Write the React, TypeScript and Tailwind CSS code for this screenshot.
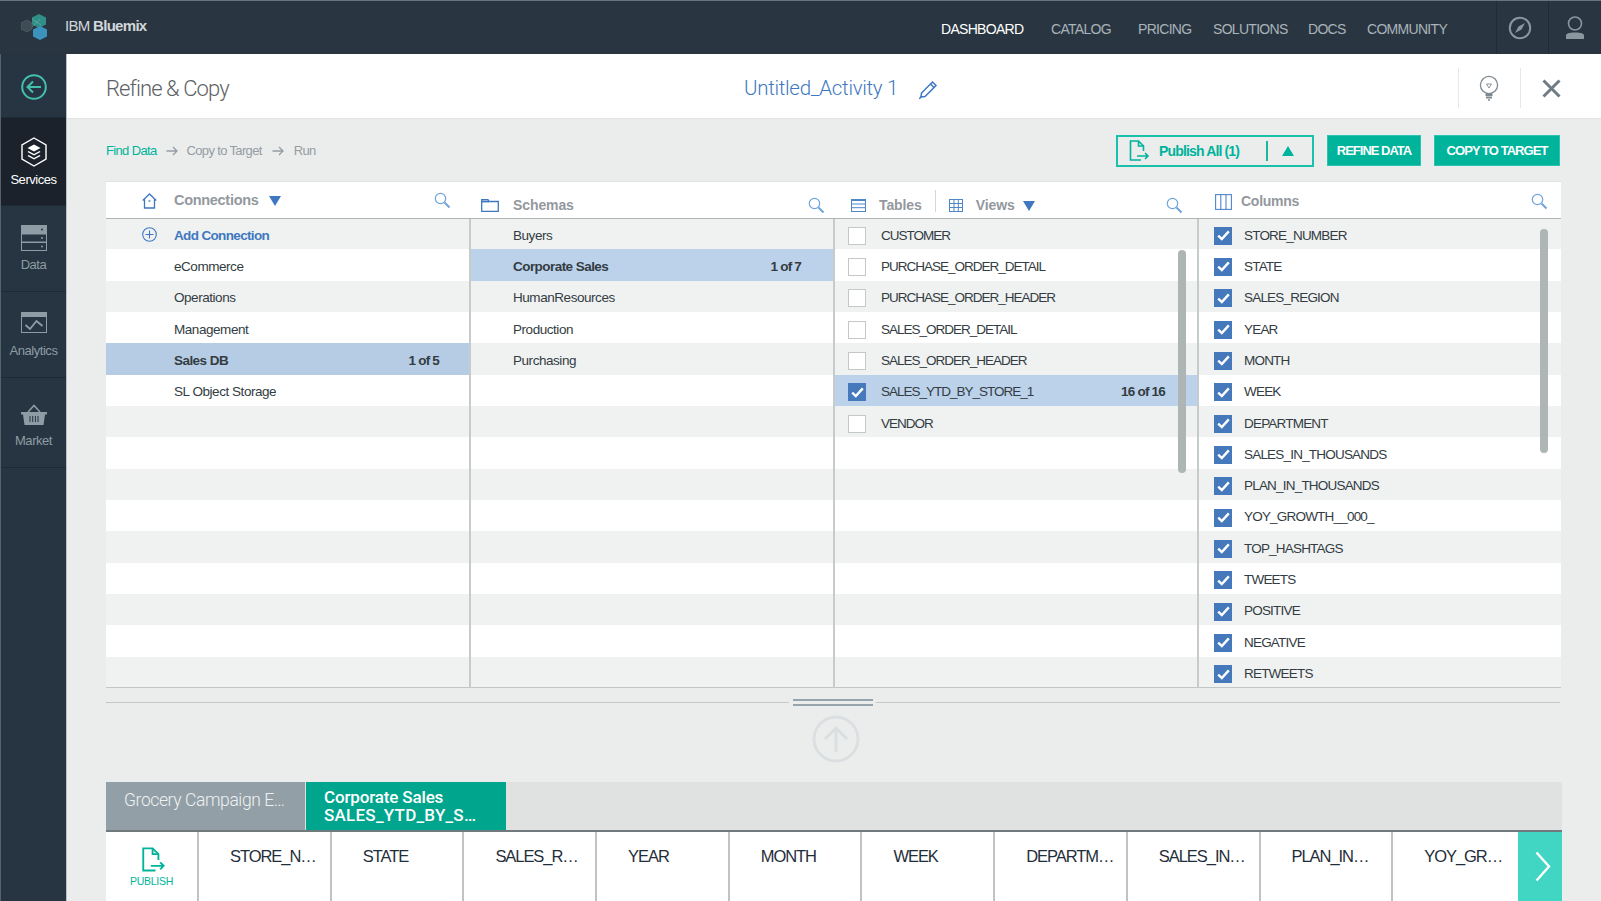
import React from "react";

const connections = ["Add Connection", "eCommerce", "Operations", "Management", "Sales DB", "SL Object Storage"];
const schemas = ["Buyers", "Corporate Sales", "HumanResources", "Production", "Purchasing"];
const tables = ["CUSTOMER", "PURCHASE_ORDER_DETAIL", "PURCHASE_ORDER_HEADER", "SALES_ORDER_DETAIL", "SALES_ORDER_HEADER", "SALES_YTD_BY_STORE_1", "VENDOR"];
const cols = ["STORE_NUMBER", "STATE", "SALES_REGION", "YEAR", "MONTH", "WEEK", "DEPARTMENT", "SALES_IN_THOUSANDS", "PLAN_IN_THOUSANDS", "YOY_GROWTH__000_", "TOP_HASHTAGS", "TWEETS", "POSITIVE", "NEGATIVE", "RETWEETS"];
const heads = ["STORE_N…", "STATE", "SALES_R…", "YEAR", "MONTH", "WEEK", "DEPARTM…", "SALES_IN…", "PLAN_IN…", "YOY_GR…"];
const ROWS = Array.from({ length: 15 }, (_, i) => i);

function Search() {
  return (
    <svg width="17" height="17" viewBox="0 0 17 17" fill="none" stroke="#6fa3dc">
      <circle cx="6.5" cy="6.5" r="5.2" strokeWidth="1.2" />
      <path d="M10.5 10.5 L15.5 15.5" strokeWidth="1.9" />
    </svg>
  );
}
function Tri({ up }: { up?: boolean }) {
  return (
    <svg width="12" height="10" viewBox="0 0 12 10" fill={up ? "#00b39b" : "#3f78c0"}>
      <path d={up ? "M6 0 L12 10 L0 10 Z" : "M0 0 L12 0 L6 10 Z"} />
    </svg>
  );
}
function Box({ on }: { on?: boolean }) {
  if (on)
    return (
      <div className="w-[18px] h-[18px] bg-[#4679bc] flex items-center justify-center shrink-0">
        <svg width="13" height="11" viewBox="0 0 13 11" fill="none" stroke="#fff" strokeWidth="2.4">
          <path d="M1.2 5.6 L4.8 9 L11.8 1.4" />
        </svg>
      </div>
    );
  return <div className="w-[18px] h-[18px] bg-white border border-[#c4c8c8] shrink-0" />;
}
function Publish({ size = 24 }: { size?: number }) {
  return (
    <svg width={size} height={size} viewBox="0 0 24 24" fill="none" stroke="#00b39b" strokeWidth="1.6">
      <path d="M15 21 H4.5 V2 H12.5 L17.5 7 V12" />
      <path d="M12.5 2 V7 H17.5" />
      <path d="M11 17 H22 M19 14 L22 17 L19 20" />
    </svg>
  );
}
function Arrow() {
  return (
    <svg width="12" height="10" viewBox="0 0 12 10" fill="none" stroke="#959ca3" strokeWidth="1.3">
      <path d="M0.5 5 H11 M7 1 L11 5 L7 9" />
    </svg>
  );
}

function Column({ children, head, last }: { children: React.ReactNode; head: React.ReactNode; last?: boolean }) {
  return (
    <div className="min-w-0">
      <div className="h-[37px] border-b border-[#b1b4b4] bg-white flex items-center">{head}</div>
      <div className={"h-[469px] overflow-hidden border-b border-[#c3c6c6] " + (last ? "" : "border-r-2 border-r-[#c8cbcb]")}>{children}</div>
    </div>
  );
}

function Row({ i, selected, children }: { i: number; selected?: string; children?: React.ReactNode }) {
  const bg = selected ? selected : i % 2 === 0 ? "bg-[#f0f2f2]" : "bg-white";
  const h = i === 0 ? "h-[30.33px] pt-[3px]" : "h-[31.33px] pt-[4px]";
  return <div className={h + " flex items-center text-[13.5px] tracking-[-0.45px] text-[#333c42] " + bg}>{children}</div>;
}

function SideItem({ h, active, icon, label }: { h: string; active?: boolean; icon: React.ReactNode; label: string }) {
  return (
    <div className={h + " flex flex-col items-center border-b border-[#1b2a35] " + (active ? "bg-[#1b222b] text-white" : "text-[#8e9ca5]")}>
      {icon}
      <span className="text-[13px] tracking-[-0.45px] leading-[16px]">{label}</span>
    </div>
  );
}

export default function App() {
  return (
    <div className="w-[1601px] h-[901px] overflow-hidden flex flex-col bg-[#ebeded] font-['Liberation_Sans',Arial,sans-serif]">
      {/* top bar */}
      <header className="h-[54px] shrink-0 bg-[#293641] border-t border-t-[#68737b] flex items-center text-[#aab3ba] text-[14px] tracking-[-0.7px]">
        <div className="ml-[21px] w-[26px] h-[26px] mt-[-1px]">
          <svg width="26" height="26" viewBox="0 0 26 26">
            <path d="M6 6 L11 9 L11 15 L6 18 L0 15 L0 9 Z" fill="#3e4c56" stroke="#5b6871" strokeWidth="0.6" />
            <path d="M18 0 L25 3.5 L25 10.5 L18 14 L11 10.5 L11 3.5 Z" fill="#2f8f87" />
            <path d="M19 12 L26 15.5 L26 22.5 L19 26 L12 22.5 L12 15.5 Z" fill="#3c91bd" />
            <path d="M11 5 L20 11 M11 13 L19 5" stroke="#7fb6b0" strokeWidth="0.5" />
          </svg>
        </div>
        <div className="ml-[18px] text-[15px] text-[#d3d7da] mt-[-2px] w-[83px]">
          IBM <span className="font-bold">Bluemix</span>
        </div>
        <nav className="ml-[793px] flex items-center mt-[3px]">
          <span className="text-white w-[110px]">DASHBOARD</span>
          <span className="w-[87px]">CATALOG</span>
          <span className="w-[75px]">PRICING</span>
          <span className="w-[95px]">SOLUTIONS</span>
          <span className="w-[59px]">DOCS</span>
          <span className="w-[129px]">COMMUNITY</span>
        </nav>
        <div className="h-[53px] w-[52px] border-l border-[#1f2b35] flex items-center justify-center pr-[6px]">
          <svg width="24" height="24" viewBox="0 0 24 24" fill="none" stroke="#8b979f">
            <circle cx="12" cy="12" r="10.2" strokeWidth="2" />
            <path d="M17 7 L13.5 13.5 L7 17 L10.5 10.5 Z" fill="#8b979f" stroke="none" />
          </svg>
        </div>
        <div className="h-[53px] flex-1 border-l border-[#1f2b35] flex items-center justify-center pr-[1px]">
          <svg width="20" height="24" viewBox="0 0 20 24" fill="none">
            <circle cx="10" cy="7.5" r="6.5" stroke="#8b979f" strokeWidth="1.6" />
            <path d="M1 23 V19.5 C1 17.5 4 16.5 10 16.5 C16 16.5 19 17.5 19 19.5 V23 Z" fill="#8b979f" />
          </svg>
        </div>
      </header>

      <div className="flex flex-1 min-h-0">
        {/* sidebar */}
        <aside className="w-[67px] shrink-0 bg-[#263541] flex flex-col border-l border-l-[#56626b] border-r border-r-[#b9c0c4]">
          <div className="h-[64px] pt-[3px] flex items-center justify-center border-b border-[#1b2a35]">
            <svg width="26" height="26" viewBox="0 0 26 26" fill="none" stroke="#43c0ab" strokeWidth="2">
              <circle cx="13" cy="13" r="11.8" />
              <path d="M20 13 H6.5 M12 7.5 L6.5 13 L12 18.5" />
            </svg>
          </div>
          <SideItem
            h="h-[88px]"
            active
            label="Services"
            icon={
              <svg className="mt-[19px] mb-[5px]" width="26" height="30" viewBox="0 0 26 30" fill="none">
                <path d="M13 1 L25 8 V22 L13 29 L1 22 V8 Z" stroke="#fff" strokeWidth="1.4" />
                <path d="M13 7.5 L19.5 11 L13 14.5 L6.5 11 Z" fill="#fff" />
                <path d="M7.5 14 L13 17 L18.5 14 L19.5 15 L13 18.5 L6.5 15 Z" fill="#fff" />
                <path d="M7.5 18 L13 21 L18.5 18 L19.5 19 L13 22.5 L6.5 19 Z" fill="#fff" />
              </svg>
            }
          />
          <SideItem
            h="h-[86px]"
            label="Data"
            icon={
              <svg className="mt-[19px] mb-[6px]" width="26" height="26" viewBox="0 0 26 26">
                <rect x="0.5" y="0.5" width="25" height="8" fill="#8e9ca5" stroke="#8e9ca5" />
                <rect x="0.5" y="9" width="25" height="8" fill="none" stroke="#8e9ca5" />
                <rect x="0.5" y="17.5" width="25" height="8" fill="none" stroke="#8e9ca5" />
                <circle cx="21" cy="4.5" r="1" fill="#263541" />
                <circle cx="21" cy="13" r="1" fill="#8e9ca5" />
                <circle cx="21" cy="21.5" r="1" fill="#8e9ca5" />
              </svg>
            }
          />
          <SideItem
            h="h-[86px]"
            label="Analytics"
            icon={
              <svg className="mt-[20px] mb-[10px]" width="26" height="21" viewBox="0 0 26 21" fill="none" stroke="#8e9ca5">
                <rect x="0.5" y="0.5" width="25" height="20" />
                <rect x="0.5" y="0.5" width="25" height="4" fill="#8e9ca5" />
                <path d="M4.5 13 L9 17 L15.5 9 L21.5 14" strokeWidth="1.8" />
              </svg>
            }
          />
          <SideItem
            h="h-[90px]"
            label="Market"
            icon={
              <svg className="mt-[26px] mb-[7px]" width="26" height="22" viewBox="0 0 26 22">
                <path d="M0 8 H26 V10.5 H24 L22.5 21 H3.5 L2 10.5 H0 Z" fill="#8e9ca5" />
                <path d="M7 8 L13 1.5 L19 8" fill="none" stroke="#8e9ca5" strokeWidth="1.6" />
                <path d="M9 12 V18 M11.7 12 V18 M14.4 12 V18 M17 12 V18" stroke="#263541" strokeWidth="1" />
              </svg>
            }
          />
        </aside>

        {/* main */}
        <main className="flex-1 min-w-0 flex flex-col">
          {/* title */}
          <div className="h-[64px] shrink-0 bg-white flex items-center pl-[39px] pt-[4px]">
            <span className="w-[638px] text-[22px] tracking-[-0.9px] text-[#5d6266] font-['Roboto',sans-serif] font-light">Refine &amp; Copy</span>
            <span className="text-[20.5px] tracking-[-0.3px] text-[#3f78c0] font-['Roboto',sans-serif] font-light">Untitled_Activity 1</span>
            <svg className="ml-[21px] mt-[2px]" width="19" height="19" viewBox="0 0 19 19" fill="none" stroke="#3f78c0" strokeWidth="1.5">
              <path d="M2.5 13 L13.5 2 L17 5.5 L6 16.5 L2 17 Z" />
              <path d="M11.5 4 L15 7.5" />
              <path d="M0 19 L2.5 16.5" />
            </svg>
            <div className="ml-auto h-[40px] w-[62px] border-l border-[#e6e8e8] flex items-center justify-center pr-[1px]">
              <svg width="20" height="26" viewBox="0 0 20 26" fill="none" stroke="#7e8a91">
                <circle cx="10" cy="10" r="8.6" strokeWidth="1.3" />
                <path d="M7.5 9 H12.5 L10 13 Z" strokeWidth="0.9" />
                <path d="M6.5 20 H13.5 M7 22.5 H13" strokeWidth="1.8" />
                <path d="M9 25 H11" strokeWidth="1.4" />
              </svg>
            </div>
            <div className="h-[40px] w-[81px] border-l border-[#e6e8e8] flex items-center pl-[21px]">
              <svg width="19" height="19" viewBox="0 0 19 19" stroke="#6f7c84" strokeWidth="3">
                <path d="M1.5 1.5 L17.5 17.5 M17.5 1.5 L1.5 17.5" />
              </svg>
            </div>
          </div>

          {/* toolbar */}
          <div className="h-[64px] shrink-0 pl-[39px] pr-[41px] flex items-center border-t border-t-[#e2e4e4]">
            <div className="flex items-center text-[13px] tracking-[-0.65px] text-[#959ca3] mt-[1px]">
              <span className="text-[#00b39b]">Find Data</span>
              <span className="ml-[9px] mr-[9px]"><Arrow /></span>
              <span>Copy to Target</span>
              <span className="mx-[10px]"><Arrow /></span>
              <span>Run</span>
            </div>
            <div className="ml-auto flex items-start">
              <div className="w-[198px] h-[32px] border-2 border-[#19c0aa] flex items-center pl-[8px] text-[#00b39b] text-[14px] font-bold tracking-[-0.85px]">
                <Publish />
                <span className="ml-[9px] w-[107px] pt-[2px]">Publish All (1)</span>
                <span className="h-[20px] border-l-2 border-[#19b8a3]" />
                <span className="ml-[14px] flex"><Tri up /></span>
              </div>
              <div className="ml-[13px] w-[94px] h-[31px] pt-[2px] bg-[#00b39b] border border-[#2cc4b0] text-white text-[13px] font-bold tracking-[-1px] flex items-center justify-center">REFINE DATA</div>
              <div className="ml-[13px] w-[126px] h-[31px] pt-[2px] bg-[#00b39b] border border-[#2cc4b0] text-white text-[13px] font-bold tracking-[-0.95px] flex items-center justify-center">COPY TO TARGET</div>
            </div>
          </div>

          {/* four-column picker */}
          <div className="relative ml-[39px] mr-[40px] h-[506px] shrink-0 grid grid-cols-[365px_364px_364px_1fr] shadow-[0_-1px_0_#e0e2e2]">
            <Column
              head={
                <div className="flex items-center w-full pt-[1px]">
                  <svg className="ml-[36px]" width="15" height="16" viewBox="0 0 15 16" fill="none" stroke="#3f78c0" strokeWidth="1.3">
                    <path d="M0.7 7.5 L7.5 1 L14.3 7.5 M2.5 6 V15 H12.5 V6" />
                    <path d="M6.5 8 H8.5" />
                  </svg>
                  <span className="ml-[17px] text-[14.5px] font-bold tracking-[-0.3px] text-[#93989e]">Connections</span>
                  <span className="ml-[10px] flex"><Tri /></span>
                  <span className="ml-auto mr-[20px] flex"><Search /></span>
                </div>
              }
            >
              {ROWS.map((i) => (
                <Row key={i} i={i} selected={i === 4 ? "bg-[#b6cce4]" : undefined}>
                  {i === 0 && (
                    <svg className="ml-[36px] mt-[-3px] mr-[17px]" width="15" height="15" viewBox="0 0 15 15" fill="none" stroke="#3f78c0" strokeWidth="1.1">
                      <circle cx="7.5" cy="7.5" r="6.8" />
                      <path d="M7.5 3.5 V11.5 M3.5 7.5 H11.5" />
                    </svg>
                  )}
                  <span className={i === 0 ? "text-[#3f78c0] font-bold tracking-[-0.65px]" : i === 4 ? "pl-[68px] font-bold tracking-[-0.55px]" : "pl-[68px]"}>{connections[i]}</span>
                  {i === 4 && <span className="ml-auto mr-[30px] font-bold tracking-[-0.8px]">1 of 5</span>}
                </Row>
              ))}
            </Column>

            <Column
              head={
                <div className="flex items-center w-full pt-[11px]">
                  <svg className="ml-[10px]" width="18" height="13" viewBox="0 0 18 13" fill="none" stroke="#3f78c0" strokeWidth="1.3">
                    <path d="M0.7 0.7 H7 L8 2.5 H17.3 V12.3 H0.7 Z" />
                    <path d="M0.7 2.5 H8" strokeWidth="1.8" />
                  </svg>
                  <span className="ml-[14px] text-[14px] font-bold tracking-[-0.1px] text-[#93989e]">Schemas</span>
                  <span className="ml-auto mr-[10px] flex"><Search /></span>
                </div>
              }
            >
              {ROWS.map((i) => (
                <Row key={i} i={i} selected={i === 1 ? "bg-[#bbd2ea]" : undefined}>
                  <span className={i === 1 ? "pl-[42px] font-bold tracking-[-0.55px]" : "pl-[42px]"}>{schemas[i]}</span>
                  {i === 1 && <span className="ml-auto mr-[32px] font-bold tracking-[-0.8px]">1 of 7</span>}
                </Row>
              ))}
            </Column>

            <Column
              head={
                <div className="flex items-center w-full pt-[11px]">
                  <svg className="ml-[16px]" width="15" height="13" viewBox="0 0 15 13" fill="none" stroke="#4f86c9" strokeWidth="1">
                    <rect x="0.5" y="0.5" width="14" height="12" />
                    <path d="M0.5 1.5 H14.5 M0.5 5 H14.5 M0.5 8.7 H14.5" />
                  </svg>
                  <span className="ml-[13px] text-[14px] font-bold tracking-[-0.1px] text-[#93989e]">Tables</span>
                  <span className="ml-[13px] h-[22px] mt-[-9px] border-l border-[#d5d8d8]" />
                  <svg className="ml-[13px]" width="14" height="13" viewBox="0 0 14 13" fill="none" stroke="#4f86c9" strokeWidth="1">
                    <rect x="0.5" y="0.5" width="13" height="12" />
                    <path d="M0.5 4.5 H13.5 M0.5 8.5 H13.5 M5 0.5 V12.5 M9.3 0.5 V12.5" />
                  </svg>
                  <span className="ml-[13px] text-[14px] font-bold tracking-[-0.1px] text-[#93989e]">Views</span>
                  <span className="ml-[8px] flex"><Tri /></span>
                  <span className="ml-auto mr-[16px] flex"><Search /></span>
                </div>
              }
            >
              {ROWS.map((i) => (
                <Row key={i} i={i} selected={i === 5 ? "bg-[#bbd2ea]" : undefined}>
                  {i < 7 && (
                    <>
                      <span className="ml-[13px] flex"><Box on={i === 5} /></span>
                      <span className="ml-[15px] tracking-[-1px]">{tables[i]}</span>
                    </>
                  )}
                  {i === 5 && <span className="ml-auto mr-[32px] font-bold tracking-[-0.8px]">16 of 16</span>}
                </Row>
              ))}
            </Column>

            <Column
              last
              head={
                <div className="flex items-center w-full pt-[3px]">
                  <svg className="ml-[16px]" width="17" height="16" viewBox="0 0 17 16" fill="none" stroke="#4f86c9" strokeWidth="1.1">
                    <rect x="0.6" y="0.6" width="15.8" height="14.8" />
                    <path d="M5.8 0.6 V15.4 M11 0.6 V15.4" />
                  </svg>
                  <span className="ml-[9px] text-[14px] font-bold tracking-[-0.25px] text-[#93989e]">Columns</span>
                  <span className="ml-auto mr-[13px] flex"><Search /></span>
                </div>
              }
            >
              {ROWS.map((i) => (
                <Row key={i} i={i}>
                  <span className="ml-[15px] flex"><Box on /></span>
                  <span className="ml-[12px] tracking-[-0.8px]">{cols[i]}</span>
                </Row>
              ))}
            </Column>

            {/* scrollbars lie over the lists */}
            <div className="absolute left-[1072px] top-[68px] w-[8px] h-[223px] rounded-[4px] bg-[#aeb5b5]" />
            <div className="absolute left-[1434px] top-[47px] w-[8px] h-[224px] rounded-[4px] bg-[#aeb5b5]" />
          </div>

          {/* splitter */}
          <div className="relative h-[94px] shrink-0 ml-[39px] mr-[41px]">
            <div className="absolute left-0 right-0 top-[14px] border-t border-[#c3c8ca]" />
            <div className="absolute left-[683px] w-[87px] top-[11px] h-[7px] bg-[#ebeded] flex flex-col justify-between items-center">
              <div className="w-[80px] border-t-2 border-[#98a4ab]" />
              <div className="w-[80px] border-t-2 border-[#98a4ab]" />
            </div>
            <svg className="absolute left-[706px] top-[27px]" width="48" height="48" viewBox="0 0 48 48" fill="none" stroke="#dcdfe1" strokeWidth="3">
              <circle cx="24" cy="24" r="22" />
              <path d="M24 37 V13 M13 24 L24 13 L35 24" />
            </svg>
          </div>

          {/* tabs */}
          <div className="h-[50px] shrink-0 ml-[39px] mr-[39px] bg-[#e0e2e2] border-b-2 border-[#707a7c] flex">
            <div className="w-[199px] bg-[#939fa6] text-[#eef1f2] text-[17.5px] tracking-[-0.4px] font-['Roboto',sans-serif] font-light flex items-center pl-[18px] pb-[12px]">Grocery Campaign E…</div>
            <div className="w-[1px]" />
            <div className="w-[200px] bg-[#00a58e] text-white text-[17px] font-medium leading-[18px] font-['Roboto',sans-serif] pl-[18px] pt-[6px]">
              <div className="tracking-[-0.15px]">Corporate Sales</div>
              <div className="tracking-[0.25px]">SALES_YTD_BY_S…</div>
            </div>
          </div>

          {/* column heads */}
          <div className="flex-1 min-h-0 ml-[39px] mr-[39px] bg-white flex">
            <div className="flex-1 min-w-0 overflow-hidden flex">
              <div className="w-[93px] shrink-0 border-r-2 border-[#bfc3c3] flex flex-col items-center pt-[14px] text-[#00b39b] text-[10.5px] tracking-[-0.3px]">
                <Publish size={28} />
                <span>PUBLISH</span>
              </div>
              {heads.map((h, i) => (
                <div key={h} className={"w-[132.7px] shrink-0 pl-[31px] pt-[12px] text-[16.5px] tracking-[-1.05px] text-[#1f2e3a] " + (i < 9 ? "border-r-2 border-[#bfc3c3]" : "")}>
                  {h}
                </div>
              ))}
            </div>
            <div className="w-[44px] shrink-0 bg-[#41d6c3] flex items-center justify-center pl-[6px]">
              <svg className="mt-[-1px]" width="16" height="31" viewBox="0 0 16 31" fill="none" stroke="#fff" strokeWidth="2.4">
                <path d="M1.5 1.5 L14 15.5 L1.5 29.5" />
              </svg>
            </div>
          </div>
        </main>
      </div>
    </div>
  );
}
